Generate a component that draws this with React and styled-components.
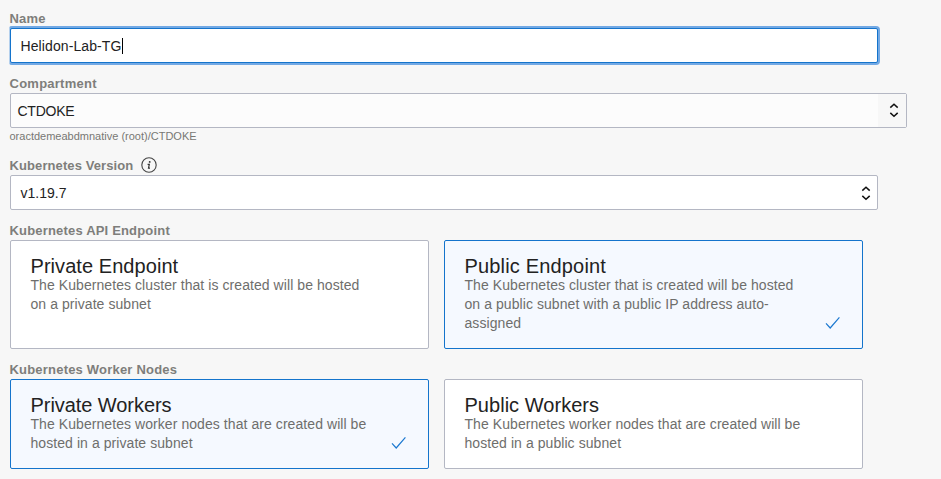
import React from "react";
import styled, { createGlobalStyle } from "styled-components";

const GlobalStyle = createGlobalStyle`
  * { box-sizing: border-box; }
  body {
    margin: 0;
    background: #f7f7f7;
    font-family: "Liberation Sans", Arial, Helvetica, sans-serif;
    font-size: 14px;
    color: #222;
  }
`;

const Form = styled.form`
  display: flex;
  flex-direction: column;
  height: 479px;
  overflow: hidden;
  padding: 10px 0 0 10px;
`;

const Field = styled.div`
  display: flex;
  flex-direction: column;
  align-items: flex-start;
  height: ${(p) => p.$height}px;
`;

const Label = styled.label`
  display: flex;
  align-items: center;
  gap: 8px;
  height: 18px;
  font-size: 13px;
  font-weight: bold;
  line-height: 18px;
  letter-spacing: ${(p) => p.$tracking || 0}px;
  text-indent: -0.5px;
  color: #7e7e7b;
  white-space: nowrap;

  svg {
    margin-bottom: 2px;
  }
`;

const Control = styled.div`
  display: flex;
  align-items: stretch;
  justify-content: space-between;
  width: ${(p) => p.$width}px;
  height: 35px;
  border: 1px solid #b4b7c3;
  border-radius: 2px;
  background: ${(p) => p.$background || "#fff"};
`;

const FocusedControl = styled(Control)`
  border-color: #1474cc;
  box-shadow: 0 0 0 2px #73a9e4;
  clip-path: inset(-2px -2px -2px -0.5px);
`;

const Value = styled.span`
  display: flex;
  align-items: center;
  padding: 2px 0 0 ${(p) => p.$indent}px;
  line-height: 19px;
  letter-spacing: ${(p) => p.$tracking || 0}px;
  white-space: nowrap;
`;

const Caret = styled.span`
  width: 1px;
  height: 16px;
  margin-bottom: 2px;
  background: #000;
`;

const Toggle = styled.span`
  display: flex;
  align-items: center;
  justify-content: center;
  width: ${(p) => p.$width}px;
  padding: 0 0 ${(p) => p.$lift || 0}px ${(p) => p.$shift || 0}px;
  background: ${(p) => p.$background || "transparent"};
`;

const Hint = styled.span`
  font-size: 11px;
  line-height: 16px;
  text-indent: -0.5px;
  color: #777774;
`;

const Cards = styled.div`
  display: grid;
  grid-template-columns: 419px 419px;
  grid-auto-rows: ${(p) => p.$height}px;
  column-gap: 15px;
`;

const Card = styled.div`
  display: grid;
  grid-template-columns: 345px 1fr;
  padding: 16px 0 0 19.5px;
  border: 1px solid ${(p) => (p.$selected ? "#1474cc" : "#b4b7c3")};
  border-radius: 2px;
  background: ${(p) => (p.$selected ? "#f5f9ff" : "#fff")};
`;

const Title = styled.h3`
  margin: 0;
  font-size: 20px;
  font-weight: normal;
  line-height: 19px;
  letter-spacing: ${(p) => p.$tracking || 0}px;
`;

const Description = styled.p`
  margin: 0;
  line-height: 19px;
  letter-spacing: 0.068px;
  color: #6e6e6c;
  white-space: nowrap;
`;

const CheckSlot = styled.span`
  align-self: end;
  display: flex;
  padding: 0 0 19px 15px;
`;

function UpDown() {
  return (
    <svg width="10" height="16" viewBox="0 0 10 16" fill="none" stroke="#111" strokeWidth="1.5">
      <path d="M1.3 5.6 5 2.2 8.7 5.6M1.3 10.9 5 14.3 8.7 10.9" />
    </svg>
  );
}

function Info() {
  return (
    <svg width="16" height="16" viewBox="0 0 16 16">
      <circle cx="8" cy="8" r="7.2" fill="none" stroke="#444" strokeWidth="1.1" />
      <circle cx="8.7" cy="4.9" r="0.95" fill="#333" />
      <path d="M6.6 7.3H8.3L7.5 11.2H9" fill="none" stroke="#333" strokeWidth="1.2" />
    </svg>
  );
}

function Check() {
  return (
    <svg width="16" height="13" viewBox="0 0 16 13" fill="none" stroke="#1b78d0" strokeWidth="1.2">
      <path d="M1 7.4 5.2 12 14.4 1.4" />
    </svg>
  );
}

function Choice({ title, lines, selected, titleTracking }) {
  return (
    <Card $selected={selected}>
      <div>
        <Title $tracking={titleTracking}>{title}</Title>
        <Description>
          {lines.map((line) => (
            <React.Fragment key={line}>
              {line}
              <br />
            </React.Fragment>
          ))}
        </Description>
      </div>
      {selected && (
        <CheckSlot>
          <Check />
        </CheckSlot>
      )}
    </Card>
  );
}

export default function App() {
  return (
    <>
      <GlobalStyle />
      <Form>
        <Field $height={65}>
          <Label $tracking={0.15}>Name</Label>
          <FocusedControl $width={868}>
            <Value $indent={9.5} $tracking={0.1}>
              Helidon-Lab-TG
              <Caret />
            </Value>
          </FocusedControl>
        </Field>
        <Field $height={82}>
          <Label $tracking={0.25}>Compartment</Label>
          <Control $width={897} $background="#fcfcfc">
            <Value $indent={6.5} $tracking={-0.25}>
              CTDOKE
            </Value>
            <Toggle $width={28} $shift={3} $lift={2} $background="#f7f7f7">
              <UpDown />
            </Toggle>
          </Control>
          <Hint>oractdemeabdmnative (root)/CTDOKE</Hint>
        </Field>
        <Field $height={65}>
          <Label $tracking={0.1}>
            Kubernetes Version
            <Info />
          </Label>
          <Control $width={868}>
            <Value $indent={9.5}>v1.19.7</Value>
            <Toggle $width={23}>
              <UpDown />
            </Toggle>
          </Control>
        </Field>
        <Field $height={139}>
          <Label $tracking={0.18}>Kubernetes API Endpoint</Label>
          <Cards $height={109}>
            <Choice
              title="Private Endpoint"
              titleTracking={0.06}
              lines={["The Kubernetes cluster that is created will be hosted", "on a private subnet"]}
            />
            <Choice
              selected
              title="Public Endpoint"
              titleTracking={0.17}
              lines={[
                "The Kubernetes cluster that is created will be hosted",
                "on a public subnet with a public IP address auto-",
                "assigned",
              ]}
            />
          </Cards>
        </Field>
        <Field $height={108}>
          <Label $tracking={0.2}>Kubernetes Worker Nodes</Label>
          <Cards $height={90}>
            <Choice
              selected
              title="Private Workers"
              titleTracking={-0.06}
              lines={["The Kubernetes worker nodes that are created will be", "hosted in a private subnet"]}
            />
            <Choice
              title="Public Workers"
              titleTracking={0.03}
              lines={["The Kubernetes worker nodes that are created will be", "hosted in a public subnet"]}
            />
          </Cards>
        </Field>
      </Form>
    </>
  );
}
